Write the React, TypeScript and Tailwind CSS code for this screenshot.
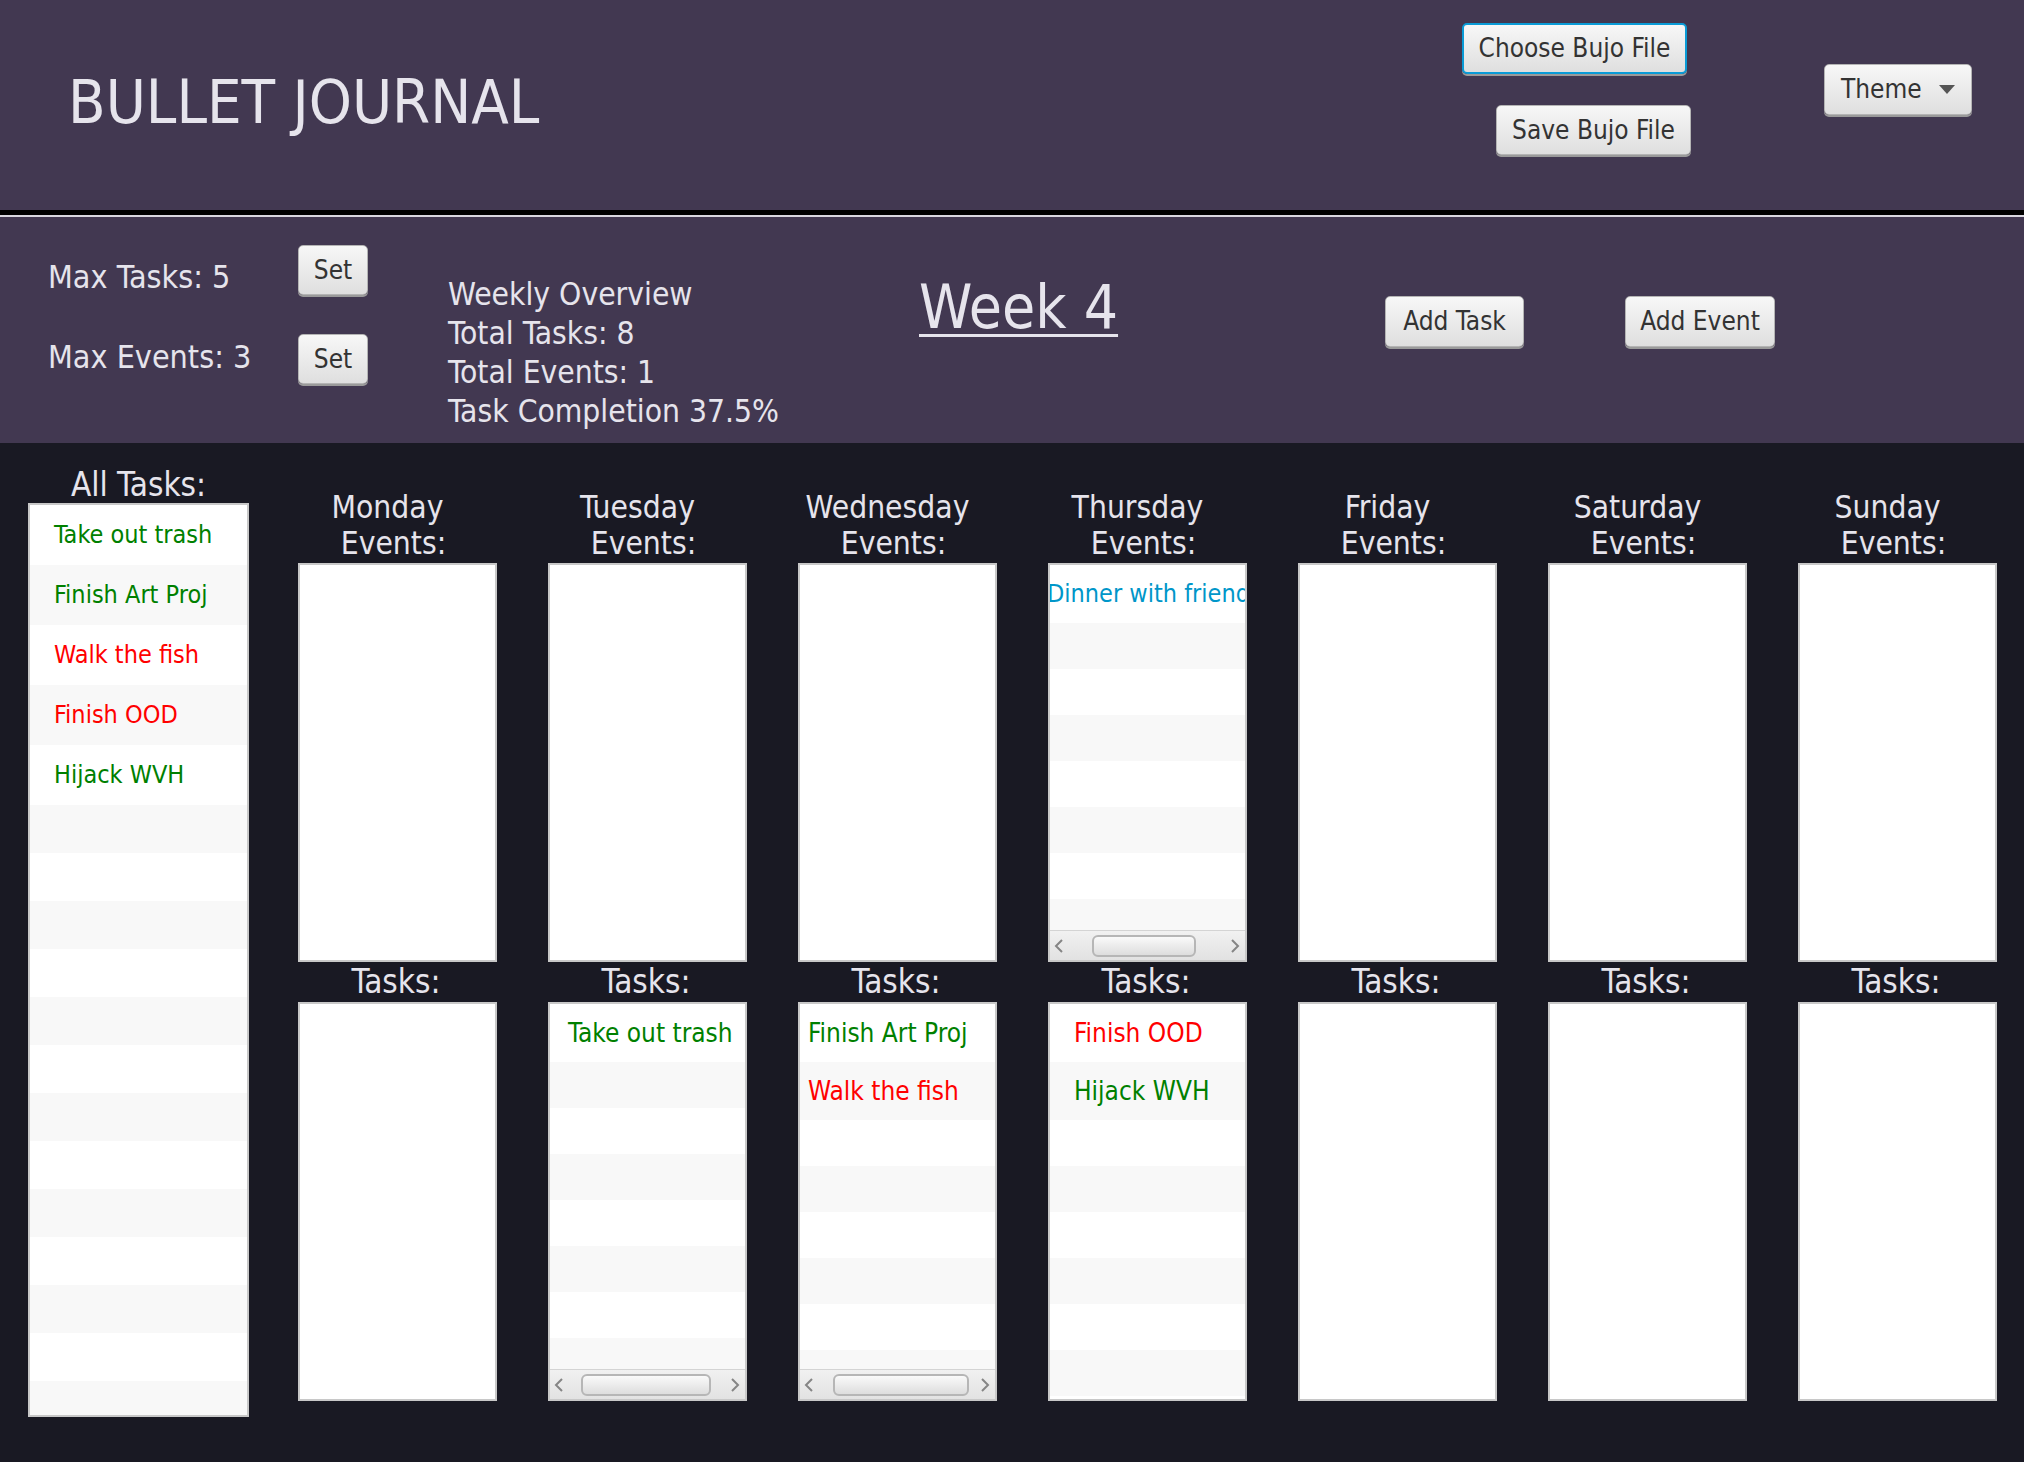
import React from "react";

type Item = { text: string; color: string };

type Day = {
  name: string;
  events: Item[];
  tasks: Item[];
  eventPad?: string;
  eventText?: string;
  taskPad?: string;
  eventScroll?: string;
  taskScroll?: string;
};

const GREEN = "text-[#008000]";
const RED = "text-[#ff0000]";
const BLUE = "text-[#0096c9]";

const allTasks: Item[] = [
  { text: "Take out trash", color: GREEN },
  { text: "Finish Art Proj", color: GREEN },
  { text: "Walk the fish", color: RED },
  { text: "Finish OOD", color: RED },
  { text: "Hijack WVH", color: GREEN },
];

const days: Day[] = [
  { name: "Monday", events: [], tasks: [] },
  {
    name: "Tuesday",
    events: [],
    tasks: [{ text: "Take out trash", color: GREEN }],
    taskPad: "pl-[18px]",
    taskScroll: "ml-[17px] w-[130px]",
  },
  {
    name: "Wednesday",
    events: [],
    tasks: [
      { text: "Finish Art Proj", color: GREEN },
      { text: "Walk the fish", color: RED },
    ],
    taskPad: "pl-[8px]",
    taskScroll: "ml-[19px] w-[136px]",
  },
  {
    name: "Thursday",
    events: [{ text: "Dinner with friend", color: BLUE }],
    tasks: [
      { text: "Finish OOD", color: RED },
      { text: "Hijack WVH", color: GREEN },
    ],
    eventPad: "pl-0 -ml-[3px]",
    eventText: "text-[25px]",
    taskPad: "pl-[24px]",
    eventScroll: "ml-[28px] w-[104px]",
  },
  { name: "Friday", events: [], tasks: [] },
  { name: "Saturday", events: [], tasks: [] },
  { name: "Sunday", events: [], tasks: [] },
];

function Btn({
  children,
  className = "",
}: {
  children: React.ReactNode;
  className?: string;
}) {
  return (
    <button
      className={`flex items-center justify-center rounded-[5px] bg-linear-to-b from-[#f7f7f7] to-[#dfdfdf] text-[26px] text-[#333333] shadow-[0_2px_0_#9a9a9a] ${className}`}
    >
      {children}
    </button>
  );
}

function Chevron({ right = false }: { right?: boolean }) {
  return (
    <svg width="10" height="16" viewBox="0 0 10 16" className="shrink-0">
      <polyline
        points={right ? "2,2 8,8 2,14" : "8,2 2,8 8,14"}
        fill="none"
        stroke="#858585"
        strokeWidth="2"
      />
    </svg>
  );
}

function ScrollBar({ thumb }: { thumb: string }) {
  return (
    <div className="h-[30px] shrink-0 border-t border-[#d4d4d4] bg-linear-to-b from-[#f1f1f1] to-[#e2e2e2] flex items-center">
      <div className="ml-[4px]">
        <Chevron />
      </div>
      <div
        className={`h-[22px] rounded-[6px] border-2 border-[#b6b6b6] bg-linear-to-b from-[#fafafa] to-[#dddddd] ${thumb}`}
      />
      <div className="ml-auto mr-[5px]">
        <Chevron right />
      </div>
    </div>
  );
}

function ListBox({
  items,
  striped,
  rowH,
  emptyH,
  textCls,
  pad = "pl-[24px]",
  scroll,
  className = "",
}: {
  items: Item[];
  striped: boolean;
  rowH: string;
  emptyH: string;
  textCls: string;
  pad?: string;
  scroll?: string;
  className?: string;
}) {
  const rows: (Item | null)[] = striped
    ? [...items, ...Array.from({ length: 24 }, () => null)]
    : [];
  return (
    <div
      className={`flex flex-col bg-white border-2 border-[#c8c8c8] overflow-hidden ${className}`}
    >
      <div className="flex-1 overflow-hidden">
        {rows.map((it, i) => (
          <div
            key={i}
            className={`${i % 2 ? "bg-[#f8f8f8]" : "bg-white"} ${
              it ? rowH : emptyH
            } flex items-center whitespace-nowrap ${textCls} ${pad}`}
          >
            {it && <span className={it.color}>{it.text}</span>}
          </div>
        ))}
      </div>
      {scroll && <ScrollBar thumb={scroll} />}
    </div>
  );
}

export default function App() {
  return (
    <div className="w-[2024px] h-[1462px] flex flex-col bg-[#191923] font-['DejaVu_Sans_Condensed','Liberation_Sans',Arial,sans-serif] text-[#e6e4ec] overflow-hidden">
      <header className="h-[210px] shrink-0 bg-[#423851] flex items-start">
        <h1 className="ml-[68px] mt-[68px] text-[61px] leading-[68px] font-normal">
          BULLET JOURNAL
        </h1>
        <div className="ml-auto mt-[23px] flex flex-col items-end gap-[31px]">
          <Btn className="mr-[4px] w-[225px] h-[51px] border-2 border-[#0a9bd6] shadow-[0_0_4px_#35b0e2,inset_0_0_0_1px_#ffffff]">
            Choose Bujo File
          </Btn>
          <Btn className="w-[195px] h-[50px] border border-[#b4b4b4]">
            Save Bujo File
          </Btn>
        </div>
        <Btn className="ml-[133px] mt-[64px] mr-[52px] w-[148px] h-[51px] border border-[#b4b4b4] justify-start pl-[16px]">
          Theme
          <span className="ml-[17px] border-x-[8px] border-x-transparent border-t-[9px] border-t-[#555555]" />
        </Btn>
      </header>

      <div className="h-[5px] shrink-0 bg-black" />
      <div className="h-[2px] shrink-0 bg-[#d9d7e0]" />

      <section className="h-[226px] shrink-0 bg-[#423851] flex items-start">
        <div className="ml-[48px] mt-[28px] flex flex-col gap-[39px]">
          <div className="flex items-center h-[50px]">
            <span className="w-[250px] text-[32px] translate-y-[7px]">Max Tasks: 5</span>
            <Btn className="w-[70px] h-[50px] border border-[#b4b4b4]">Set</Btn>
          </div>
          <div className="flex items-center h-[50px]">
            <span className="w-[250px] text-[32px] -translate-y-[2px]">Max Events: 3</span>
            <Btn className="w-[70px] h-[50px] border border-[#b4b4b4]">Set</Btn>
          </div>
        </div>
        <div className="ml-[80px] mt-[58px] w-[471px] text-[31.5px] leading-[39px]">
          <p>Weekly Overview</p>
          <p>Total Tasks: 8</p>
          <p>Total Events: 1</p>
          <p>Task Completion 37.5%</p>
        </div>
        <div className="mt-[56px] w-[466px]">
          <span className="text-[60px] leading-[68px] underline decoration-[3px] underline-offset-[6px]">
            Week 4
          </span>
        </div>
        <Btn className="mt-[79px] w-[139px] h-[51px] border border-[#b4b4b4]">
          Add Task
        </Btn>
        <Btn className="ml-[101px] mt-[79px] w-[150px] h-[51px] border border-[#b4b4b4]">
          Add Event
        </Btn>
      </section>

      <main className="flex-1 flex items-start">
        <div className="ml-[28px] mt-[23px] w-[221px] flex flex-col items-center">
          <div className="text-[33px] leading-[37px]">All Tasks:</div>
          <ListBox
            items={allTasks}
            striped
            rowH="h-[60px]"
            emptyH="h-[48px]"
            textCls="text-[25px]"
            className="w-full h-[914px]"
          />
        </div>
        <div className="ml-[49px] mt-[46px] flex gap-[51px]">
          {days.map((d) => (
            <div key={d.name} className="w-[199px] flex flex-col items-center">
              <div className="text-[31.5px] leading-[36px] text-center mb-[2px] mr-[8px]">
                <span className="pr-[12px]">{d.name}</span>
                <br />
                Events:
              </div>
              <ListBox
                items={d.events}
                striped={d.events.length > 0}
                rowH="h-[58px]"
                emptyH="h-[46px]"
                textCls={d.eventText ?? "text-[26px]"}
                pad={d.eventPad}
                scroll={d.eventScroll}
                className="w-full h-[399px]"
              />
              <div className="text-[33px] leading-[40px] mr-[3px]">Tasks:</div>
              <ListBox
                items={d.tasks}
                striped={d.tasks.length > 0}
                rowH="h-[58px]"
                emptyH="h-[46px]"
                textCls="text-[26px]"
                pad={d.taskPad}
                scroll={d.taskScroll}
                className="w-full h-[399px]"
              />
            </div>
          ))}
        </div>
      </main>
    </div>
  );
}
